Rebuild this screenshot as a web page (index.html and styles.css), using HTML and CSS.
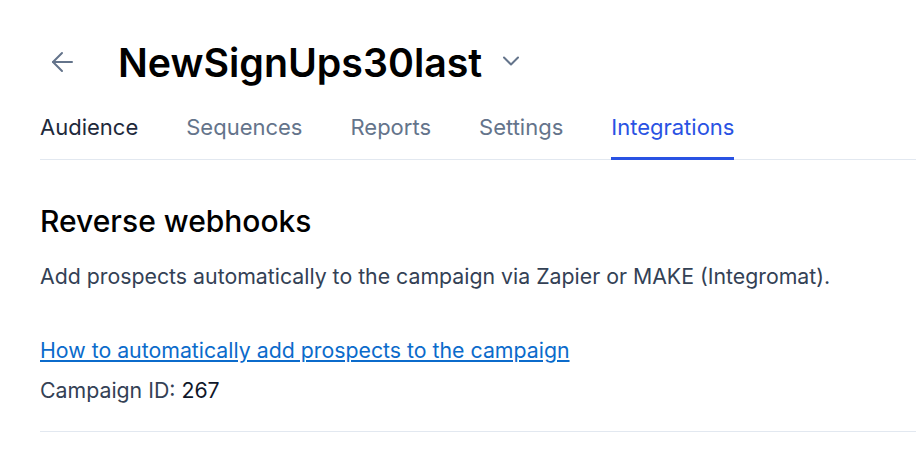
FILE: index.html
```html
<!DOCTYPE html>
<html lang="en">
<head>
    <meta charset="UTF-8">
    <meta name="viewport" content="width=device-width, initial-scale=1.0">
    <title>NewSignUps30last - Integrations</title>
    <link rel="stylesheet" href="styles.css">
</head>
<body>

    <div class="page">
        <div class="header">
            <a class="back" href="#" aria-label="Back">
                <svg width="24" height="24" viewBox="0 0 24 24" fill="none" stroke="currentColor" stroke-width="2" stroke-linecap="round" stroke-linejoin="round">
                    <path d="M22 12H3"/>
                    <path d="M12 3l-9 9 9 9"/>
                </svg>
            </a>
            <h1>NewSignUps30last</h1>
            <button class="menu-toggle" aria-label="Open menu">
                <svg width="20" height="20" viewBox="0 0 20 20" fill="none" stroke="currentColor" stroke-width="2" stroke-linecap="round" stroke-linejoin="round">
                    <path d="M3 6.5l7 7 7-7"/>
                </svg>
            </button>
        </div>

        <nav class="tabs">
            <a href="#" class="tab dark">Audience</a>
            <a href="#" class="tab">Sequences</a>
            <a href="#" class="tab">Reports</a>
            <a href="#" class="tab">Settings</a>
            <a href="#" class="tab active">Integrations</a>
        </nav>

        <section class="section">
            <h2>Reverse webhooks</h2>
            <p class="desc">Add prospects automatically to the campaign via Zapier or MAKE (Integromat).</p>
            <p class="help"><a href="#">How to automatically add prospects to the campaign</a></p>
            <p class="campaign-id">Campaign ID: <span>267</span></p>
        </section>
    </div>

</body>
</html>
```

FILE: styles.css
```css
body {
    font-family: Inter, "Noto Sans", sans-serif;
    background-color: #fff;
    margin: 0;
    padding: 0;
    color: #0f172a;
}
.page {
    padding: 39px 0 0 40px;
}
.header {
    display: flex;
    align-items: center;
    height: 46px;
}
.back {
    color: #64748b;
    display: flex;
    margin-left: 10px;
    margin-right: 44px;
}
h1 {
    margin: 0;
    font-size: 39.3px;
    font-weight: 600;
    color: #000;
}
.menu-toggle {
    border: none;
    background: none;
    padding: 0;
    margin-left: 19px;
    color: #64748b;
    display: flex;
    margin-top: -2px;
}
.tabs {
    display: flex;
    gap: 48px;
    margin-top: 25px;
    border-bottom: 1px solid #e2e8f0;
}
.tab {
    font-size: 22px;
    color: #64748b;
    text-decoration: none;
    padding: 4px 0 17px;
    border-bottom: 3px solid transparent;
    margin-bottom: -1px;
}
.tab.dark {
    color: #1e293b;
}
.tab.active {
    color: #2952e3;
    border-bottom-color: #2952e3;
}
.section {
    padding: 43px 0 28px;
    border-bottom: 1px solid #e2e8f0;
}
h2 {
    margin: 0;
    font-size: 30px;
    font-weight: 500;
    color: #000;
}
.desc,
.help,
.campaign-id {
    font-size: 21.3px;
    color: #334155;
}
.desc {
    margin: 24px 0 0;
}
.help {
    margin: 48px 0 0;
}
.help a {
    color: #0b6bcb;
}
.campaign-id {
    margin: 14px 0 0;
}
.campaign-id span {
    color: #0f172a;
}
```
